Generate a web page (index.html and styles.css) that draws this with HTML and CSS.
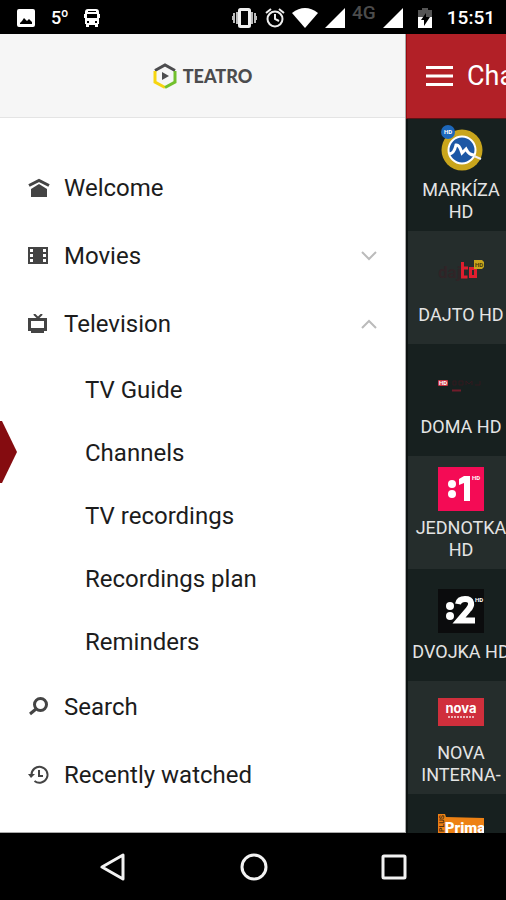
FILE: index.html
```html
<!DOCTYPE html>
<html lang="en">
<head>
<meta charset="utf-8">
<meta name="viewport" content="width=device-width, initial-scale=1">
<title>Teatro</title>
<link rel="stylesheet" href="styles.css">
</head>
<body>
<div class="status">
  <div class="status-group notices">
    <svg width="18" height="18" viewBox="0 0 18 18"><path fill="#fff" fill-rule="evenodd" d="M2 0h14a2 2 0 0 1 2 2v14a2 2 0 0 1-2 2H2a2 2 0 0 1-2-2V2a2 2 0 0 1 2-2zM3 15h12v-2l-3-3-2 2-3-3-2 3-2 2z"/></svg>
    <span class="degrees">5<sup>o</sup></span>
    <svg width="16" height="18" viewBox="0 0 16 18"><path fill="#fff" fill-rule="evenodd" d="M4 0h8q3 0 3 3v2h1v4h-1v6h-1v3h-3v-2H5v2H2v-3H1V9H0V5h1V3q0-3 3-3zM4 2v1h8V2zM3 5v4h10V5zM3 12v2h2v-2zM11 12v2h2v-2z"/></svg>
  </div>
  <div class="status-group signals">
    <svg width="27" height="20" viewBox="0 0 27 20"><path fill="#bbb" d="M1 8h1V5h2v10H2v-3H1zM5 4h2v12H5zM20 4h2v12h-2zM23 5h2v3h1v4h-1v3h-2z"/><rect x="8.500" y="1.500" width="10" height="17" rx="1" fill="none" stroke="#eee" stroke-width="3"/></svg>
    <svg width="20" height="20" viewBox="0 0 20 20" fill="none" stroke="#eee" stroke-width="2"><circle cx="10" cy="11" r="7.500"/><path d="M1 5l5-4M19 5l-5-4M10 6v5l4 2"/></svg>
    <svg width="26" height="20" viewBox="0 0 26 20"><path fill="#fff" d="M0 5Q13-5 26 5L13 20z"/></svg>
    <svg width="20" height="20" viewBox="0 0 20 20"><path fill="#fff" d="M20 0v20H0z"/></svg>
    <span class="network">4G</span>
    <svg width="20" height="20" viewBox="0 0 20 20"><path fill="#fff" d="M20 0v20H0z"/></svg>
    <svg class="battery" width="14" height="20" viewBox="0 0 14 20"><path fill="#555" d="M4 0h6v2h4v8H0V2h4z"/><path fill="#fff" d="M0 9h14v11H0z"/><path fill="#000" d="M8 5L3 12h3v6l6-9H8z"/></svg>
    <span class="clock">15:51</span>
  </div>
</div>

<div class="app">
  <aside class="drawer">
    <header class="brand">
      <svg width="24" height="26" viewBox="0 0 24 26" fill="none" stroke-width="3"><path stroke="#4c4c4e" d="M2 7.500L12 2l10 5.500"/><path stroke="#f6d50f" d="M2 8v11l10 5.500"/><path stroke="#72c02c" d="M22 8v11l-10 5.500"/><path fill="#4c4c4e" d="M9 9l7 4-7 4z"/></svg>
      <span>TEATRO</span>
    </header>
    <nav aria-label="Main menu">
      <ul class="menu">
        <li><a class="item" href="#welcome">
          <svg class="icon" viewBox="0 0 22 20"><path fill="none" stroke="#444" stroke-width="3" d="M1 7.500l10-5 10 5"/><path fill="#444" d="M3 11l8-5 8 5v8H3z"/></svg>
          <span>Welcome</span></a></li>
        <li><a class="item" href="#movies">
          <svg class="icon" viewBox="0 0 22 20"><path fill="#444" fill-rule="evenodd" d="M0 1h20v17H0zM2 3v3h3V3zM2 8v3h3V8zM2 13v3h3v-3zM15 3v3h3V3zM15 8v3h3V8zM15 13v3h3v-3z"/></svg>
          <span>Movies</span>
          <svg class="chevron" viewBox="0 0 16 10"><path d="M1 1l7 7 7-7"/></svg></a></li>
        <li><a class="item" href="#television">
          <svg class="icon" viewBox="0 0 22 20"><path fill="#444" fill-rule="evenodd" d="M0 4h19v13H0zM3 7v7h13V7zM3 17h13v2H3z"/><path fill="none" stroke="#444" stroke-width="2" d="M6 0l4 4 4-4"/></svg>
          <span>Television</span>
          <svg class="chevron" viewBox="0 0 16 10"><path d="M1 9l7-7 7 7"/></svg></a>
          <ul class="submenu">
            <li><a href="#guide">TV Guide</a></li>
            <li class="current"><a href="#channels" aria-current="page">Channels</a></li>
            <li><a href="#recordings">TV recordings</a></li>
            <li><a href="#plan">Recordings plan</a></li>
            <li><a href="#reminders">Reminders</a></li>
          </ul></li>
        <li><a class="item" href="#search">
          <svg class="icon" viewBox="0 0 22 20" fill="none" stroke="#444"><circle cx="12.500" cy="7.500" r="6" stroke-width="3"/><path stroke-width="3" d="M8 12l-6 5"/></svg>
          <span>Search</span></a></li>
        <li><a class="item" href="#recent">
          <svg class="icon" viewBox="0 0 22 20"><path fill="none" stroke="#444" stroke-width="2" d="M3.500 10a8 8 0 1 1 3 6M11 5v6h4"/><path fill="#444" d="M0 9h7l-4 4z"/></svg>
          <span>Recently watched</span></a></li>
      </ul>
    </nav>
  </aside>

  <main class="page">
    <header class="toolbar">
      <button type="button" aria-label="Menu"><svg width="28" height="22" viewBox="0 0 28 22"><path stroke="#fff" stroke-width="3" d="M0 2.500h27M0 11h27M0 19.500h27"/></svg></button>
      <h1>Channels</h1>
    </header>
    <ul class="channels">
      <li><svg width="46" height="50" viewBox="0 0 46 50"><circle cx="24" cy="27" r="20.500" fill="#c9a51c"/><circle cx="24" cy="27" r="13.500" fill="#1c57a5" stroke="#fff" stroke-width="2"/><path fill="none" stroke="#fff" stroke-width="3" d="M11 31q5 0 7-9 3-1 6 8l4-4q3 6 8 6"/><path stroke="#eee" stroke-width="2" d="M36 33l7 3"/><circle cx="10" cy="9" r="7" fill="#1d67ba"/><text x="10" y="11" class="tag">HD</text></svg><span>MARKÍZA HD</span></li>
      <li><svg width="46" height="50" viewBox="0 0 46 50"><text x="0" y="32" class="dajto">daj</text><path fill="none" stroke="#df1e2e" stroke-width="3" d="M24.500 16v15h5M24 22h6M32.500 22.500h5v8h-5z"/><path fill="#c9a51c" d="M36 14h8l2 2v5l-2 2h-8z"/><text x="41" y="21" class="tag dark">HD</text></svg><span>DAJTO HD</span></li>
      <li><svg width="46" height="50" viewBox="0 0 46 50"><rect x="0" y="22" width="10" height="6" rx="1" fill="#c93543"/><text x="5" y="27" class="tag">HD</text><path stroke="#721c2b" stroke-width="2" d="M14 32.500h9"/><path fill="none" stroke="#33191f" stroke-width="1" d="M15 27h3v-4h-3zM21 27h4v-4h-4zM28 27v-4l3 3 3-3v4M37 27h5v-4"/></svg><span>DOMA HD</span></li>
      <li><svg width="46" height="44" viewBox="0 0 46 44"><path fill="#f40b55" d="M0 0h46v44H0z"/><g fill="#fff"><circle cx="14" cy="17" r="4"/><circle cx="14" cy="27" r="4"/><path d="M26 9h6v25h-6V16l-5 2v-6z"/></g><text x="38" y="13" class="tag">HD</text></svg><span>JEDNOTKA HD</span></li>
      <li><svg width="46" height="44" viewBox="0 0 46 44"><path fill="#0b0c0d" d="M0 0h46v44H0z"/><g fill="#fff"><circle cx="12" cy="17" r="4"/><circle cx="12" cy="27" r="4"/></g><path fill="none" stroke="#fff" stroke-width="6" d="M20 15q1-5 7-5c7 0 8 6 3 11L21 31.500h16"/><text x="41" y="13" class="tag">HD</text></svg><span>DVOJKA HD</span></li>
      <li><svg width="46" height="28" viewBox="0 0 46 28"><path fill="#d02f3c" d="M0 0h46v28H0z"/><text x="23" y="15" class="nova">nova</text><path stroke="#eeb2b6" stroke-width="2" stroke-dasharray="2 1" d="M10 19h27"/></svg><span>NOVA INTERNA-</span></li>
      <li class="prima"><svg width="46" height="28" viewBox="0 0 46 28"><path fill="#ed8114" d="M0 0h7l1 3 38 1v24H0z"/><text x="27" y="19" class="prima-name">Prima</text><text transform="translate(6 18) rotate(-90)" class="plus">PLUS</text></svg></li>
    </ul>
  </main>
</div>

<footer class="system">
  <button type="button" aria-label="Back"><svg width="28" height="28" viewBox="0 0 28 28"><path d="M24 2v24L3 14z"/></svg></button>
  <button type="button" aria-label="Home"><svg width="28" height="28" viewBox="0 0 28 28"><circle cx="14" cy="14" r="12"/></svg></button>
  <button type="button" aria-label="Overview"><svg width="28" height="28" viewBox="0 0 28 28"><rect x="3" y="3" width="22" height="22" rx="1"/></svg></button>
</footer>
</body>
</html>
```
FILE: styles.css
```css
* { box-sizing: border-box; }
body {
  margin: 0;
  height: 100vh;
  display: flex;
  flex-direction: column;
  overflow: hidden;
  background: #000;
  font-family: Roboto, "Liberation Sans", sans-serif;
}
ul { list-style: none; margin: 0; padding: 0; }
a { color: inherit; text-decoration: none; }
button { border: 0; padding: 0; background: none; display: flex; }
svg { display: block; flex: none; }

.status {
  flex: none;
  height: 34px;
  padding: 2px 11px 0 17px;
  display: flex;
  justify-content: space-between;
  align-items: center;
  color: #fff;
}
.status-group { display: flex; align-items: center; }
.notices { gap: 16px; }
.degrees { font-size: 18px; font-weight: 500; line-height: 20px; }
.degrees sup { font-size: 12px; line-height: 0; }
.signals { gap: 7px; }
.network { font-size: 19px; font-weight: 500; line-height: 20px; color: #4c4c4c; padding-bottom: 10px; }
.battery { margin: 0 8px; }
.clock { font-size: 19px; font-weight: 500; line-height: 20px; }

.app { flex: 1; min-height: 0; display: flex; overflow: hidden; }
.drawer {
  flex: 1;
  min-width: 0;
  overflow: hidden;
  background: #fff;
  border-right: 1px solid #aaa;
  border-bottom: 1px solid #aaa;
}
.brand {
  height: 84px;
  display: flex;
  align-items: center;
  justify-content: center;
  gap: 6px;
  background: #f6f6f6;
  border-bottom: 1px solid #e4e4e4;
  color: #4c4c4e;
  font: 900 18px/24px Lato, sans-serif;
}
.menu { padding-top: 36px; color: #1c1c1c; font-size: 24px; line-height: 28px; }
.item {
  height: 68px;
  padding: 0 28px;
  display: flex;
  align-items: center;
  gap: 14px;
}
.icon { width: 22px; height: 20px; }
.chevron {
  width: 16px;
  height: 10px;
  margin-left: auto;
  fill: none;
  stroke: #bbb;
  stroke-width: 2;
}
.submenu a { height: 63px; padding-left: 85px; display: flex; align-items: center; }
.current { position: relative; }
.current::before {
  content: "";
  position: absolute;
  left: 0;
  top: 0;
  width: 17px;
  height: 62px;
  background: #850c10;
  clip-path: polygon(0 0, 2px 0, 100% 50%, 2px 100%, 0 100%);
}

.page { flex: none; width: 100px; overflow: hidden; background: #0c1211; }
.toolbar {
  height: 85px;
  padding-left: 19px;
  display: flex;
  align-items: center;
  gap: 13px;
  background: #b22027;
  border-left: 1px solid #98090f;
  border-bottom: 1px solid #5a1215;
  color: #fff;
}
.toolbar h1 { margin: 0; font-size: 27px; font-weight: 400; line-height: 34px; }
.channels { width: 106px; margin-left: 2px; }
.channels li {
  height: 112px;
  padding-bottom: 8px;
  display: flex;
  flex-direction: column;
  align-items: center;
  justify-content: flex-end;
  gap: 6px;
  background: #17201f;
  color: #e4e4e4;
  font-size: 18px;
  line-height: 22px;
  text-align: center;
}
.channels li:nth-child(even) { height: 113px; background: #252d2c; }
.channels li:nth-child(2), .channels li:nth-child(3), .channels li:nth-child(5) { padding-bottom: 18px; gap: 8px; }
.channels li:nth-child(6) { gap: 16px; }
.channels .prima { justify-content: flex-start; padding-top: 20px; }

.tag { font-size: 6px; font-weight: 700; fill: #fff; text-anchor: middle; }
.dark { fill: #4b3c0c; }
.dajto { font-size: 17px; font-weight: 700; fill: #302427; }
.nova { font: 700 13px Inter, sans-serif; fill: #fff; text-anchor: middle; }
.prima-name { font-size: 15px; font-weight: 900; fill: #fff; text-anchor: middle; }
.plus { font-size: 7px; font-weight: 700; fill: #513012; }

.system {
  flex: none;
  height: 67px;
  padding: 0 98px 0 99px;
  display: flex;
  align-items: center;
  justify-content: space-between;
}
.system svg { fill: none; stroke: #f2f2f2; stroke-width: 3; stroke-linejoin: round; }
```
